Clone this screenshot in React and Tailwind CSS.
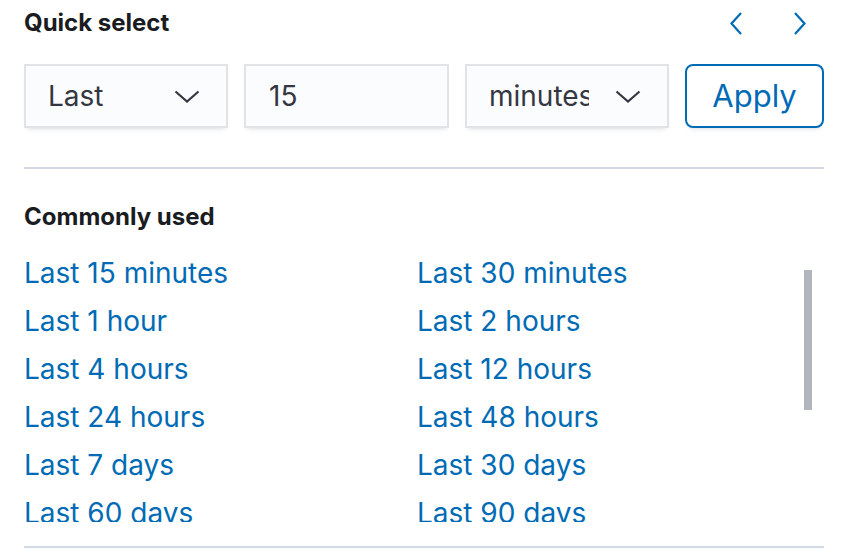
import React from "react";

const font = { fontFamily: "Inter, 'Noto Sans', sans-serif" };

function Chevron() {
  return (
    <svg width="26" height="13" viewBox="0 0 26 13" fill="none" className="shrink-0">
      <path d="M1.5 1.5 L13 11.5 L24.5 1.5" stroke="#343741" strokeWidth="2.2" strokeLinejoin="miter" />
    </svg>
  );
}

function Arrow({ dir }) {
  const d = dir === "left" ? "M11 1 L1.5 11.5 L11 22" : "M1 1 L10.5 11.5 L1 22";
  return (
    <button className="w-[48px] h-[40px] flex items-center justify-center">
      <svg width="12" height="23" viewBox="0 0 12 23" fill="none">
        <path d={d} stroke="#006bb4" strokeWidth="2.2" />
      </svg>
    </button>
  );
}

const field =
  "min-w-0 h-[64px] bg-[#fbfcfd] border-2 border-[#e1e3e7] shadow-[0_4px_4px_-3px_rgba(152,162,179,0.35)] flex items-center text-[28px] text-[#343741]";

const left = ["Last 15 minutes", "Last 1 hour", "Last 4 hours", "Last 24 hours", "Last 7 days", "Last 60 days", "Last 1 year"];
const right = ["Last 30 minutes", "Last 2 hours", "Last 12 hours", "Last 48 hours", "Last 30 days", "Last 90 days", "Last 2 years"];

export default function App() {
  return (
    <div className="w-[848px] h-[558px] bg-white px-[24px] overflow-hidden" style={font}>
      <div className="h-[46px] flex items-center justify-between">
        <h2 className="text-[24px] leading-[36px] font-bold text-[#1a1c21]">Quick select</h2>
        <div className="flex gap-[16px]">
          <Arrow dir="left" />
          <Arrow dir="right" />
        </div>
      </div>

      <div className="mt-[18px] grid grid-cols-[204px_205px_204px_1fr] gap-[16px]">
        <div className={field + " pl-[22px] pr-[26px] justify-between"}>
          <span>Last</span>
          <Chevron />
        </div>
        <div className={field + " pl-[23px]"}>
          <span>15</span>
        </div>
        <div className={field + " pl-[22px] pr-[26px]"}>
          <span className="block overflow-hidden whitespace-nowrap w-[100px]">minutes</span>
          <span className="ml-auto">
            <Chevron />
          </span>
        </div>
        <button className="h-[64px] rounded-[8px] border-2 border-[#006bb4] bg-white text-[#006bb4] text-[31px] font-normal shadow-[0_4px_4px_-3px_rgba(152,162,179,0.35)]">
          Apply
        </button>
      </div>

      <div className="mt-[39px] h-[2px] bg-[#d3dae6]" />

      <h3 className="mt-[30px] text-[24px] leading-[36px] font-bold text-[#1a1c21]">Commonly used</h3>

      <div className="relative mt-[14px] h-[273px] overflow-hidden">
        <div className="grid grid-cols-[393px_1fr]">
          <div className="flex flex-col">
            {left.map((t) => (
              <a key={t} className="text-[28px] leading-[48px] text-[#006bb4] whitespace-nowrap">{t}</a>
            ))}
          </div>
          <div className="flex flex-col">
            {right.map((t) => (
              <a key={t} className="text-[28px] leading-[48px] text-[#006bb4] whitespace-nowrap">{t}</a>
            ))}
          </div>
        </div>
        <div className="absolute right-[12px] top-[21px] w-[8px] h-[140px] bg-[#b2b5bc]" />
      </div>

      <div className="mt-[24px] h-[2px] bg-[#d3dae6]" />
    </div>
  );
}
